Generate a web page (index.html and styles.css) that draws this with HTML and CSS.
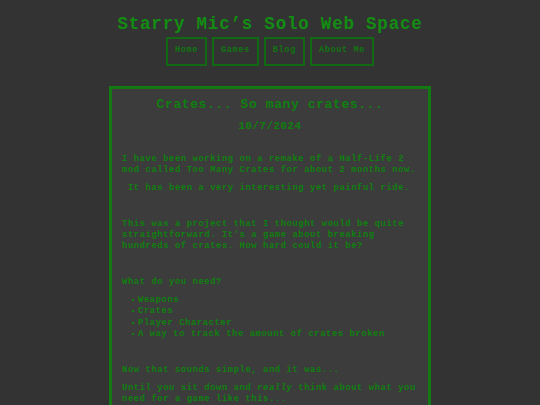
FILE: index.html
```html
<!DOCTYPE html>
<html lang="en">
<head>
<meta charset="utf-8">
<title>Starry Mic's Solo Web Space</title>
<link rel="stylesheet" href="styles.css">
</head>
<body>
<header class="site-header">
  <h1 class="site-title">Starry Mic’s Solo Web Space</h1>
  <nav class="nav">
    <a class="nav-link" href="#">Home</a>
    <a class="nav-link" href="#">Games</a>
    <a class="nav-link" href="#">Blog</a>
    <a class="nav-link" href="#">About Me</a>
  </nav>
</header>
<main class="post">
  <h2 class="post-title">Crates... So many crates...</h2>
  <h3 class="post-date">10/7/2024</h3>
  <p class="text first">I have been working on a remake of a Half-Life 2 mod called Too Many Crates for about 2 months now.</p>
  <p class="text">&nbsp;It has been a very interesting yet painful ride.</p>
  <p class="text">&nbsp;</p>
  <p class="text">This was a project that I thought would be quite straightforward. It's a game about breaking hundreds of crates. How hard could it be?</p>
  <p class="text">&nbsp;</p>
  <p class="text">What do you need?</p>
  <ul class="list">
    <li class="item">Weapons</li>
    <li class="item">Crates</li>
    <li class="item">Player Character</li>
    <li class="item">A way to track the amount of crates broken</li>
  </ul>
  <p class="text">&nbsp;</p>
  <p class="text">Now that sounds simple, and it was...</p>
  <p class="text">Until you sit down and <em class="em">really</em> think about what you need for a game like this...</p>
</main>
</body>
</html>
```
FILE: styles.css
```css
html, body {
  margin: 0;
  padding: 0;
}
body {
  background: #333333;
  color: #0f800f;
  font-family: "Liberation Mono", "DejaVu Sans Mono", monospace;
  font-weight: bold;
  overflow: hidden;
}
.site-header {
  text-align: center;
  padding-top: 13px;
}
.site-title {
  margin: 0;
  font-size: 17.5px;
  letter-spacing: 0.8px;
  line-height: 22px;
  color: #128d12;
}
.nav {
  display: flex;
  justify-content: center;
  gap: 5px;
  margin-top: 2px;
}
.nav-link {
  display: block;
  border: 2px solid #116a11;
  padding: 6px 7px 8px;
  font-size: 8.6px;
  letter-spacing: 0.6px;
  line-height: 11px;
  color: #117511;
  text-decoration: none;
}
.post {
  box-sizing: border-box;
  width: 322px;
  margin: 20px auto 0;
  border: 3px solid #137a13;
  background: #3c3c3c;
  padding: 8px 10px 0 10px;
}
.post-title {
  margin: 0;
  text-align: center;
  font-size: 13px;
  letter-spacing: 0.6px;
  line-height: 16px;
}
.post-date {
  margin: 6px 0 0;
  text-align: center;
  font-size: 10.8px;
  letter-spacing: 0.5px;
  line-height: 14px;
}
.text {
  margin: 7px 0;
  font-size: 8.9px;
  letter-spacing: 0.55px;
  line-height: 11px;
}
.text.first {
  margin-top: 21px;
  margin-bottom: 6px;
}
.em {
  font-style: italic;
}
.list {
  list-style: none;
  margin: 4px 0 7px;
  padding: 0 0 0 16px;
  font-size: 8.9px;
  letter-spacing: 0.55px;
  line-height: 11.3px;
}
.item {
  position: relative;
}
.item::before {
  content: "";
  position: absolute;
  left: -6px;
  top: 4px;
  width: 2px;
  height: 2px;
  background: #0f800f;
}
```
